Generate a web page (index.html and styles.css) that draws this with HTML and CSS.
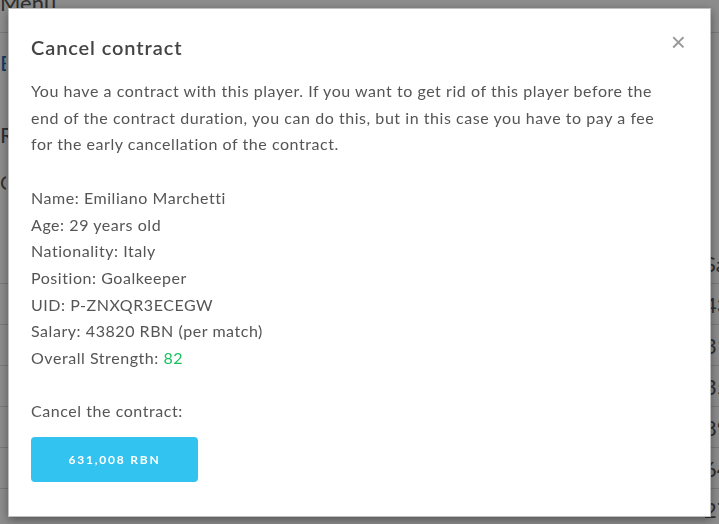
FILE: index.html
```html
<!DOCTYPE html>
<html lang="en">
<head>
    <meta charset="UTF-8">
    <meta name="viewport" content="width=device-width, initial-scale=1.0">
    <title>Players</title>
    <link rel="stylesheet" href="styles.css">
</head>
<body>
    <div class="page">
        <div class="topbar">Menu</div>
        <div class="crumbs">
            <a href="#" class="crumb-link">B</a>
            <div class="crumb-title">RI</div>
            <div class="crumb-sub">C</div>
        </div>
        <table class="players">
            <thead>
                <tr><th></th><th>Salary</th></tr>
            </thead>
            <tbody>
                <tr><td></td><td>43820</td></tr>
                <tr><td></td><td>31200</td></tr>
                <tr><td></td><td>35500</td></tr>
                <tr><td></td><td>8900</td></tr>
                <tr><td></td><td>6400</td></tr>
                <tr><td></td><td>27300</td></tr>
            </tbody>
        </table>
    </div>

    <div class="overlay">
        <div class="modal">
            <div class="modal-header">
                <h4>Cancel contract</h4>
                <button type="button" class="close">&times;</button>
            </div>
            <div class="modal-body">
                <p>You have a contract with this player. If you want to get rid of this player before the end of the contract duration, you can do this, but in this case you have to pay a fee for the early cancellation of the contract.</p>
                <ul class="info">
                    <li>Name: Emiliano Marchetti</li>
                    <li>Age: 29 years old</li>
                    <li>Nationality: Italy</li>
                    <li>Position: Goalkeeper</li>
                    <li>UID: P-ZNXQR3ECEGW</li>
                    <li>Salary: 43820 RBN (per match)</li>
                    <li>Overall Strength: <span class="strength">82</span></li>
                </ul>
                <p class="cancel-label">Cancel the contract:</p>
                <button type="button" class="pay-btn">631,008 RBN</button>
            </div>
        </div>
    </div>
</body>
</html>
```

FILE: styles.css
```css
body {
    margin: 0;
    font-family: Lato, 'Open Sans', sans-serif;
    color: #555;
    background-color: #fff;
    overflow: hidden;
    height: 524px;
}

.page {
    margin-top: -12px;
    overflow: hidden;
}

.topbar {
    font-size: 22px;
    line-height: 30px;
    padding: 0 0 14px;
    border-bottom: 1px solid #ddd;
}

.crumbs {
    padding-top: 16px;
    height: 194px;
}

.crumb-link {
    color: #1a6fb0;
    font-size: 22px;
    text-decoration: none;
    display: block;
    width: 6px;
    overflow: hidden;
}

.crumb-title {
    margin-top: 45px;
    font-size: 22px;
    width: 8px;
    overflow: hidden;
}

.crumb-sub {
    margin-top: 22px;
    font-size: 20px;
    width: 6px;
    overflow: hidden;
}

.players {
    width: 100%;
    table-layout: fixed;
    border-collapse: collapse;
    font-size: 22px;
}

.players th,
.players td {
    height: 40px;
    padding: 0;
    border-bottom: 1px solid #ddd;
    text-align: left;
    font-weight: normal;
    white-space: nowrap;
    overflow: hidden;
}

.players th:first-child,
.players td:first-child {
    width: 704px;
}

.overlay {
    position: fixed;
    top: 0;
    left: 0;
    right: 0;
    bottom: 0;
    background-color: rgba(0, 0, 0, 0.45);
    padding: 8px;
}

.modal {
    background-color: #fff;
    height: 507px;
    border: 1px solid rgba(0, 0, 0, 0.25);
    box-shadow: 0 3px 9px rgba(0, 0, 0, 0.4);
}

.modal-header {
    display: flex;
    justify-content: space-between;
    align-items: flex-start;
    padding: 22px 24px 0 22px;
}

.modal-header h4 {
    margin: 0;
    font-size: 20px;
    line-height: 32px;
    font-weight: 600;
    letter-spacing: 0.9px;
    color: #444;
}

.close {
    background: none;
    border: none;
    padding: 0;
    margin-top: 0;
    font-size: 26px;
    line-height: 22px;
    color: #999;
    cursor: pointer;
}

.modal-body {
    padding: 15px 39px 0 22px;
    font-size: 16px;
    line-height: 26.7px;
    letter-spacing: 0.55px;
}

.modal-body p {
    margin: 0;
}

.info {
    list-style: none;
    margin: 26.7px 0;
    padding: 0;
}

.strength {
    color: #19c25f;
}

.pay-btn {
    margin-top: 12px;
    width: 167px;
    height: 45px;
    background-color: #33c3f0;
    border: none;
    border-radius: 4px;
    color: #fff;
    font-family: Lato, sans-serif;
    font-size: 12px;
    font-weight: bold;
    letter-spacing: 1.8px;
    cursor: pointer;
}
```
